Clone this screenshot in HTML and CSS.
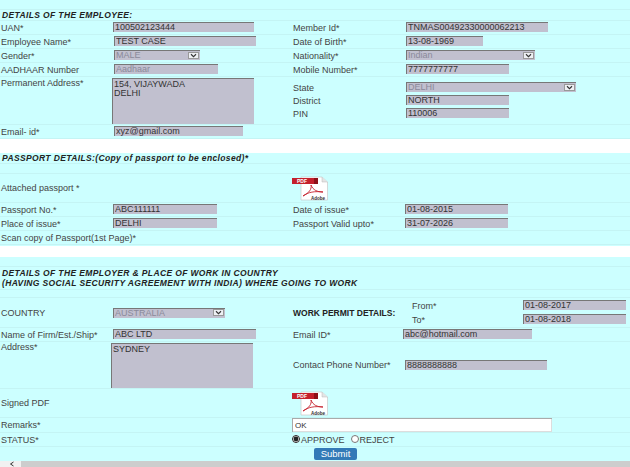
FILE: index.html
```html
<!DOCTYPE html>
<html lang="en">
  <head>
    <meta charset="UTF-8" />
    <title>Employee Details</title>
    <link rel="stylesheet" href="styles.css">
  </head>
  <body>
    <form class="page">
      <section class="block">
        <div class="row blank"></div>
        <div class="row head"><h3>DETAILS OF THE EMPLOYEE:</h3></div>
        <div class="row field">
          <label>UAN*</label>
          <input class="w141" value="100502123444" readonly />
          <label>Member Id*</label>
          <input class="w142" value="TNMAS00492330000062213" readonly />
        </div>
        <div class="row field">
          <label>Employee Name*</label>
          <input class="w142 nudge" value="TEST CASE" readonly />
          <label>Date of Birth*</label>
          <input class="w77" value="13-08-1969" readonly />
        </div>
        <div class="row field">
          <label>Gender*</label>
          <div class="select w86 nudge">MALE<span class="arrow"><svg viewBox="0 0 10 6"><path d="M2 1.5L5 4.5L8 1.5" /></svg></span></div>
          <label>Nationality*</label>
          <div class="select w129">Indian<span class="arrow"><svg viewBox="0 0 10 6"><path d="M2 1.5L5 4.5L8 1.5" /></svg></span></div>
        </div>
        <div class="row field">
          <label>AADHAAR Number</label>
          <input class="w104 nudge faded" value="Aadhaar" readonly />
          <label>Mobile Number*</label>
          <input class="w103" value="7777777777" readonly />
        </div>
        <div class="row field tall">
          <label class="top">Permanent Address*</label>
          <textarea class="w142 addr1" readonly>154, VIJAYWADA
DELHI</textarea>
          <div class="nested">
            <div class="sub">
              <label>State</label>
              <div class="select w170">DELHI<span class="arrow"><svg viewBox="0 0 10 6"><path d="M2 1.5L5 4.5L8 1.5" /></svg></span></div>
            </div>
            <div class="sub">
              <label>District</label>
              <input class="w103" value="NORTH" readonly />
            </div>
            <div class="sub">
              <label>PIN</label>
              <input class="w103" value="110006" readonly />
            </div>
          </div>
        </div>
        <div class="row field">
          <label>Email- id*</label>
          <input class="w129 nudge" value="xyz@gmail.com" readonly />
        </div>
      </section>

      <div class="gap first"></div>

      <section class="block">
        <div class="row head"><h3>PASSPORT DETAILS:(Copy of passport to be enclosed)*</h3></div>
        <div class="row blank"></div>
        <div class="row field icon-row">
          <label>Attached passport *</label>
          <span></span>
          <svg class="pdf" viewBox="0 0 36 25">
            <path d="M9 1H30L35.5 6V24H9Z" fill="#fff" stroke="#c8c8c8" stroke-width="0.7" />
            <path d="M30 1V6H35.5" fill="#e4e4e4" stroke="#bbb" stroke-width="0.5" />
            <rect x="0" y="2" width="26" height="6" fill="#c4202c" />
            <rect x="22" y="2" width="4" height="6" fill="#8e1018" />
            <text x="5" y="7" class="pdf-label">PDF</text>
            <path d="M19 9C20 13 17 17 11 20C16 16 23 15 31 16C25 16 21 14 19 9Z" fill="none" stroke="#c4202c" stroke-width="0.9" />
            <text x="19" y="23.5" class="adobe-label">Adobe</text>
          </svg>
        </div>
        <div class="row field">
          <label>Passport No.*</label>
          <input class="w104" value="ABC111111" readonly />
          <label>Date of issue*</label>
          <input class="w103 back" value="01-08-2015" readonly />
        </div>
        <div class="row field">
          <label>Place of issue*</label>
          <input class="w104" value="DELHI" readonly />
          <label>Passport Valid upto*</label>
          <input class="w103 back" value="31-07-2026" readonly />
        </div>
        <div class="row field">
          <label>Scan copy of Passport(1st Page)*</label>
        </div>
        <div class="filler"></div>
      </section>

      <div class="gap second"></div>

      <section class="block">
        <div class="row blank"></div>
        <div class="row head double">
          <h3>DETAILS OF THE EMPLOYER &amp; PLACE OF WORK IN COUNTRY<br />(HAVING SOCIAL SECURITY AGREEMENT WITH INDIA) WHERE GOING TO WORK</h3>
        </div>
        <div class="row spacer"></div>
        <div class="row field permit">
          <label>COUNTRY</label>
          <div class="select w112">AUSTRALIA<span class="arrow"><svg viewBox="0 0 10 6"><path d="M2 1.5L5 4.5L8 1.5" /></svg></span></div>
          <label class="strong">WORK PERMIT DETAILS:</label>
          <div class="dates">
            <div class="date-row"><label>From*</label><input class="w103" value="01-08-2017" readonly /></div>
            <div class="date-row"><label>To*</label><input class="w103" value="01-08-2018" readonly /></div>
          </div>
        </div>
        <div class="row field">
          <label>Name of Firm/Est./Ship*</label>
          <input class="w143" value="ABC LTD" readonly />
          <label>Email ID*</label>
          <input class="w129 pull" value="abc@hotmail.com" readonly />
        </div>
        <div class="row field addr-row">
          <label class="top">Address*</label>
          <textarea class="w142 addr2" readonly>SYDNEY</textarea>
          <label>Contact Phone Number*</label>
          <input class="w142 back" value="8888888888" readonly />
        </div>
        <div class="row field icon-row">
          <label>Signed PDF</label>
          <span></span>
          <svg class="pdf" viewBox="0 0 36 25">
            <path d="M9 1H30L35.5 6V24H9Z" fill="#fff" stroke="#c8c8c8" stroke-width="0.7" />
            <path d="M30 1V6H35.5" fill="#e4e4e4" stroke="#bbb" stroke-width="0.5" />
            <rect x="0" y="2" width="26" height="6" fill="#c4202c" />
            <rect x="22" y="2" width="4" height="6" fill="#8e1018" />
            <text x="5" y="7" class="pdf-label">PDF</text>
            <path d="M19 9C20 13 17 17 11 20C16 16 23 15 31 16C25 16 21 14 19 9Z" fill="none" stroke="#c4202c" stroke-width="0.9" />
            <text x="19" y="23.5" class="adobe-label">Adobe</text>
          </svg>
        </div>
        <div class="row field remarks">
          <label>Remarks*</label>
          <span></span>
          <input class="remark-input" value="OK" />
        </div>
        <div class="row field">
          <label>STATUS*</label>
          <span></span>
          <div class="status">
            <input type="radio" name="status" checked /><span>APPROVE</span>
            <input type="radio" name="status" class="second-radio" /><span>REJECT</span>
          </div>
        </div>
        <div class="submit-row">
          <button type="button" class="btn">Submit</button>
        </div>
      </section>

      <div class="scrollbar">
        <span class="scroll-arrow"><svg viewBox="0 0 6 6"><path d="M4.5 1L1.5 3L4.5 5" /></svg></span>
        <span class="scroll-thumb"></span>
      </div>
    </form>
  </body>
</html>
```

FILE: styles.css
```css
html,
body {
  margin: 0;
  height: 467px;
  overflow: hidden;
}
body {
  font-family: "Liberation Sans", Arial, sans-serif;
  font-size: 9px;
  color: #444;
  background-color: #fff;
}
.page {
  width: 630px;
}
.block {
  background-color: #ccffff;
}
.gap.first {
  height: 14px;
}
.gap.second {
  height: 11px;
}
.row {
  box-sizing: border-box;
  border-bottom: 1px solid #c4f4f4;
}
.blank {
  height: 10px;
}
.head {
  height: 11px;
  display: flex;
  align-items: center;
}
.head.double {
  height: 23px;
  align-items: flex-end;
  padding-bottom: 1px;
}
.spacer {
  height: 8px;
}
h3 {
  margin: 0;
  padding-left: 2px;
  font-size: 8.5px;
  line-height: 10px;
  font-style: italic;
  letter-spacing: 0.37px;
  color: #222;
  white-space: nowrap;
}
.field {
  height: 14px;
  display: grid;
  grid-template-columns: 113px 179px 114px 1fr;
  align-items: center;
}
label {
  padding-left: 1px;
  white-space: nowrap;
}
label.top {
  align-self: start;
  padding-top: 1px;
}
label.strong {
  font-weight: bold;
  font-size: 8.5px;
  color: #222;
}
input,
textarea,
.select {
  box-sizing: border-box;
  height: 10px;
  margin: 0;
  padding: 0 2px;
  font-family: inherit;
  font-size: 9px;
  color: #333;
  background-color: #c1c0cf;
  border: none;
  box-shadow: inset 1px 1px 0 #777;
  outline: none;
  border-radius: 0;
}
input {
  display: block;
  align-self: start;
  margin-top: 1px;
}
textarea {
  display: block;
  resize: none;
  overflow: hidden;
  line-height: 9px;
  padding-top: 2px;
}
.select {
  display: flex;
  align-items: center;
  justify-content: space-between;
  align-self: start;
  margin-top: 1px;
  color: #8a8a9a;
  line-height: 8px;
}
.arrow {
  width: 11px;
  height: 7px;
  margin-right: -1px;
  background-color: #eef0f4;
  border: 1px solid #999;
  box-sizing: border-box;
  display: flex;
}
.arrow svg {
  width: 100%;
  height: 100%;
}
.arrow path {
  fill: none;
  stroke: #333;
  stroke-width: 1.3;
}
.faded {
  color: #8a8a9a;
}
.nudge {
  margin-left: 1px;
}
.back {
  margin-left: -1px;
}
.pull {
  margin-left: -3px;
}
.w77 { width: 77px; }
.w86 { width: 86px; }
.w103 { width: 103px; }
.w104 { width: 104px; }
.w112 { width: 112px; }
.w129 { width: 129px; }
.w141 { width: 141px; }
.w142 { width: 142px; }
.w143 { width: 143px; }
.w170 { width: 170px; }

.tall {
  height: 48px;
  align-items: start;
}
.addr1 {
  height: 46px;
  margin-top: 1px;
  margin-left: -1px;
}
.nested {
  grid-column: 3 / 5;
  padding-top: 4px;
}
.sub {
  height: 13px;
  display: grid;
  grid-template-columns: 114px 1fr;
  align-items: center;
}
.icon-row {
  height: 29px;
}
.pdf {
  width: 36px;
  height: 25px;
  align-self: center;
}
.pdf-label {
  font-size: 5px;
  font-weight: bold;
  fill: #fff;
}
.adobe-label {
  font-size: 4.5px;
  font-weight: bold;
  fill: #333;
}
.filler {
  height: 1px;
}
.permit {
  height: 30px;
}
.permit > .select {
  align-self: center;
  margin-top: 0;
}
.dates {
  margin-left: 5px;
  padding-top: 1px;
  align-self: start;
}
.date-row {
  height: 14px;
  display: grid;
  grid-template-columns: 112px 1fr;
  align-items: center;
}
.addr-row {
  height: 47px;
}
.addr-row label.top {
  padding-top: 0;
}
.addr2 {
  height: 45px;
  align-self: start;
  margin-top: 1px;
  margin-left: -2px;
}
.addr-row input {
  align-self: center;
  margin-top: 0;
}
.remarks {
  height: 15px;
}
.remark-input {
  grid-column: 3 / 5;
  width: 260px;
  height: 14px;
  font-size: 8px;
  background-color: #fff;
  box-shadow: inset 1px 1px 0 #aaa, inset -1px -1px 0 #ddd;
  padding-left: 3px;
  margin-top: 0;
}
.status {
  grid-column: 3 / 5;
  display: flex;
  align-items: center;
}
.status input {
  width: 8px;
  height: 8px;
  margin: 0 1px 0 0;
  box-shadow: none;
  accent-color: #222;
}
.status .second-radio {
  margin-left: 6px;
}
.submit-row {
  height: 14px;
  display: flex;
  align-items: center;
  padding-left: 314px;
}
.btn {
  width: 43px;
  height: 12px;
  padding: 0;
  font-family: inherit;
  font-size: 9.5px;
  line-height: 12px;
  color: #fff;
  background-color: #337ab7;
  border: none;
  border-radius: 2px;
}
.scrollbar {
  height: 6px;
  display: flex;
  background-color: #f1f1f1;
}
.scroll-arrow {
  width: 21px;
  padding-left: 9px;
  box-sizing: border-box;
}
.scroll-arrow svg {
  display: block;
  width: 6px;
  height: 6px;
}
.scroll-arrow path {
  fill: none;
  stroke: #333;
  stroke-width: 1;
}
.scroll-thumb {
  flex: 1;
  background-color: #cdcdcd;
}
```
